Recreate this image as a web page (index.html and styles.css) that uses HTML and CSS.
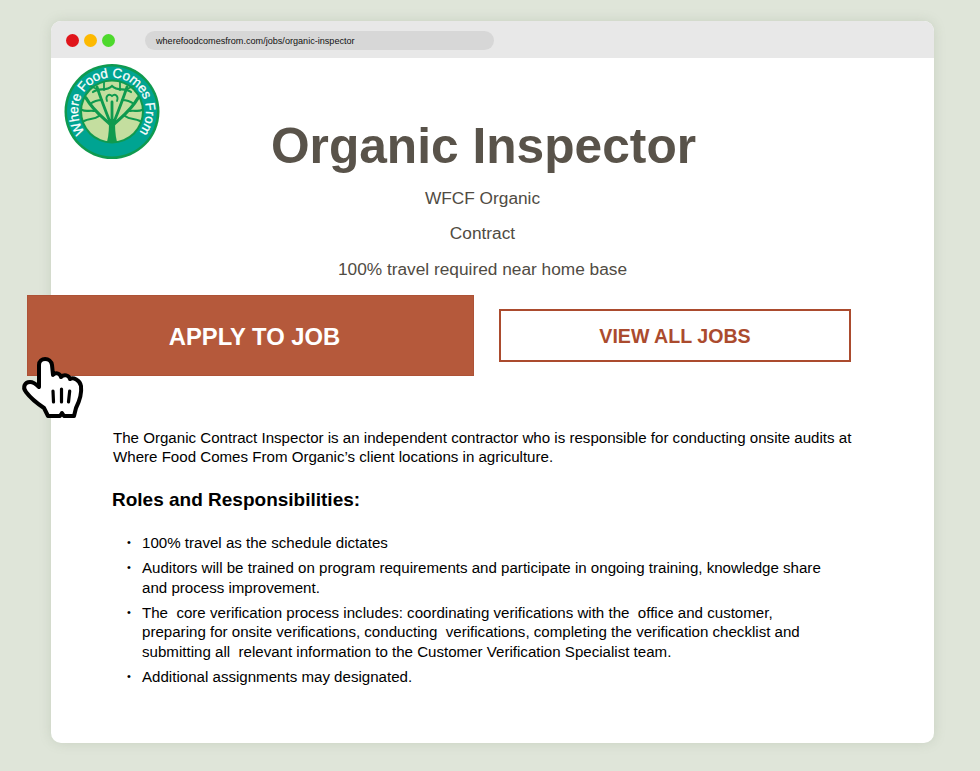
FILE: index.html
```html
<!DOCTYPE html>
<html lang="en">
<head>
<meta charset="utf-8">
<title>Organic Inspector</title>
<link rel="stylesheet" href="styles.css">
</head>
<body>
<div class="window">
  <div class="chrome">
    <span class="dot dot-red"></span>
    <span class="dot dot-yellow"></span>
    <span class="dot dot-green"></span>
    <div class="url">wherefoodcomesfrom.com/jobs/organic-inspector</div>
  </div>
  <svg class="logo" viewBox="0 0 96 96" width="96" height="96" aria-label="Where Food Comes From">
    <defs>
      <path id="arc" d="M48 81.5A34 34 0 1 1 48.1 81.5"/>
    </defs>
    <circle cx="48" cy="47.5" r="47.5" fill="#0f9a4f"/>
    <circle cx="48" cy="47.5" r="45" fill="#00a492"/>
    <circle cx="48" cy="47.5" r="32" fill="#0f9a4f"/>
    <circle cx="48" cy="47.5" r="30" fill="#c4de9f"/>
    <path d="M43 78C45 70 45 63 45 55H51C51 63 51 70 53 78Z" fill="#0f9a4f"/>
    <g fill="none" stroke="#0f9a4f" stroke-linecap="round">
      <path d="M48 62C40 54 30 48 22 34M48 62C56 54 66 48 74 34" stroke-width="3.2"/>
      <path d="M46 58C42 48 38 38 33 23M50 58C54 48 58 38 63 23M48 56V38" stroke-width="2.8"/>
      <path d="M29 28C35 23 42 28 48 22C54 28 61 23 67 28" stroke-width="2.2"/>
      <path d="M30 47C26 46 22 48 18 46M66 47C70 46 74 48 78 46M35 52C30 56 25 54 20 57M61 52C66 56 71 54 76 57" stroke-width="2.2"/>
      <path d="M43 37C41 32 45 29 48 32C51 29 55 32 53 37M38 36C34 36 30 37 26 40M58 36C62 36 66 37 70 40M33 25L26 22M63 25L70 22M40 26V18M56 26V18" stroke-width="1.8"/>
    </g>
    <text class="logo-text"><textPath href="#arc" startOffset="50%" text-anchor="middle">Where Food Comes From</textPath></text>
  </svg>
  <div class="content">
    <h1 class="title">Organic Inspector</h1>
    <p class="sub sub-first">WFCF Organic</p>
    <p class="sub">Contract</p>
    <p class="sub">100% travel required near home base</p>
    <div class="actions">
      <a class="btn-apply">APPLY TO JOB</a>
      <a class="btn-view">VIEW ALL JOBS</a>
    </div>
    <div class="body-copy">
      <p class="intro">The Organic Contract Inspector is an independent contractor who is responsible for conducting onsite audits at Where Food Comes From Organic’s client locations in agriculture.</p>
      <h2 class="roles">Roles and Responsibilities:</h2>
      <ul class="list">
        <li>100% travel as the schedule dictates</li>
        <li>Auditors will be trained on program requirements and participate in ongoing training, knowledge share and process improvement.</li>
        <li>The&nbsp; core verification process includes: coordinating verifications with the&nbsp; office and customer, preparing for onsite verifications, conducting&nbsp; verifications, completing the verification checklist and submitting all&nbsp; relevant information to the Customer Verification Specialist team.</li>
        <li>Additional assignments may designated.</li>
      </ul>
    </div>
  </div>
  <svg class="cursor" viewBox="0 0 70 70" width="70" height="70" aria-hidden="true">
    <path d="M21 27L21 11C21 3 33 3 34 11L35 21C37 18 42 19 43 23C46 20 51 21 52 25C55 23 62 26 63 32C64 40 62 46 58 54L56 62L46 62L44 59L42 62L30 62L26 54C20 50 14 46 8 38C4 33 7 28 12 28C16 28 19 31 21 33Z" fill="#fff" stroke="#000" stroke-width="4" stroke-linejoin="round"/>
    <path d="M35 37L35.5 48M43.5 35V48M51.7 37L50.5 48" fill="none" stroke="#000" stroke-width="3.2" stroke-linecap="round"/>
  </svg>
</div>
</body>
</html>
```
FILE: styles.css
```css
* { box-sizing: border-box; }
html, body { margin: 0; height: 100%; }
body {
  background: #dfe5d9;
  font-family: "Liberation Sans", Arial, sans-serif;
  overflow: hidden;
  padding: 21px 46px 0 51px;
}
.window {
  position: relative;
  height: 722px;
  background: #fff;
  border-radius: 10px;
  box-shadow: 0 0 12px rgba(120, 135, 110, .22);
}
.chrome {
  height: 37px;
  background: #e8e8e8;
  border-radius: 10px 10px 0 0;
  display: flex;
  align-items: center;
  padding: 2px 0 0 15px;
}
.dot { width: 13px; height: 13px; border-radius: 50%; margin-right: 5px; }
.dot-red { background: #e0151b; }
.dot-yellow { background: #fdb900; }
.dot-green { background: #4dd92c; }
.url {
  margin-left: 25px;
  width: 349px;
  height: 19px;
  border-radius: 10px;
  background: #d7d7d7;
  color: #111;
  font-size: 9.1px;
  line-height: 20px;
  padding-left: 11px;
}
.logo { position: absolute; left: 13px; top: 43px; }
.logo-text {
  fill: #fff;
  stroke: #fff;
  stroke-width: .25px;
  font-size: 13.4px;
  letter-spacing: -.2px;
  font-family: "Liberation Sans Narrow", "Liberation Sans", Arial, sans-serif;
}
.content { padding: 58px 0 0 0; }
.title {
  margin: 0;
  padding-right: 18px;
  text-align: center;
  font-size: 49.7px;
  line-height: 60px;
  font-weight: 700;
  color: #59534a;
}
.sub {
  margin: 14.75px 0 0;
  padding-right: 20px;
  text-align: center;
  font-size: 17.3px;
  line-height: 20.5px;
  color: #504b43;
}
.sub-first { margin-top: 12px; }
.actions {
  display: flex;
  align-items: center;
  margin: 16px 0 0 -24px;
  gap: 25px;
}
.btn-apply {
  width: 447px;
  height: 81px;
  padding: 3px 0 0 8px;
  background: #b5593b;
  color: #fff;
  font-size: 23.8px;
  font-weight: 700;
  display: flex;
  align-items: center;
  justify-content: center;
  box-shadow: inset 0 0 0 1px #ad5236;
}
.btn-view {
  width: 352px;
  height: 53px;
  padding-top: 1px;
  border: 2px solid #ab4b2e;
  color: #ab4b2e;
  font-size: 19.6px;
  font-weight: 700;
  display: flex;
  align-items: center;
  justify-content: center;
}
.body-copy { padding: 52px 0 0 62px; color: #000; }
.intro { margin: 0; width: 760px; font-size: 15.1px; line-height: 19px; }
.roles { margin: 22px 0 0 -1px; font-size: 19px; line-height: 24px; font-weight: 700; }
.list { margin: 21px 0 0; padding: 0 0 0 29px; width: 720px; list-style: none; font-size: 15.1px; line-height: 19.6px; }
.list li { position: relative; margin-bottom: 5.4px; }
.list li::before { content: "•"; position: absolute; left: -15px; font-size: 11px; }
.cursor { position: absolute; left: -33px; top: 333px; }
```
